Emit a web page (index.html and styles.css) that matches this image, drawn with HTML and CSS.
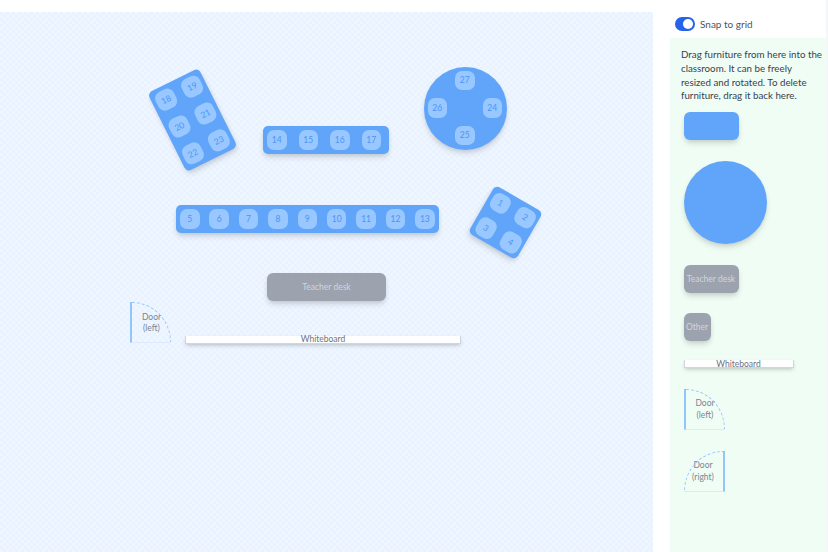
FILE: index.html
```html
<!DOCTYPE html>
<html lang="en">
<head>
<meta charset="utf-8">
<title>Classroom editor</title>
<link rel="stylesheet" href="styles.css">
</head>
<body>
<div class="app">
  <main class="classroom">
    <div class="desk round table-round">
      <span></span><span class="seat">27</span><span></span>
      <span class="seat">26</span><span></span><span class="seat">24</span>
      <span></span><span class="seat">25</span><span></span>
    </div>
    <div class="desk group-six">
      <span class="seat">18</span><span class="seat">19</span>
      <span class="seat">20</span><span class="seat">21</span>
      <span class="seat">22</span><span class="seat">23</span>
    </div>
    <div class="desk row-four">
      <span class="seat">14</span><span class="seat">15</span><span class="seat">16</span><span class="seat">17</span>
    </div>
    <div class="desk row-nine">
      <span class="seat">5</span><span class="seat">6</span><span class="seat">7</span><span class="seat">8</span><span class="seat">9</span><span class="seat">10</span><span class="seat">11</span><span class="seat">12</span><span class="seat">13</span>
    </div>
    <div class="desk group-four">
      <span class="seat">1</span><span class="seat">2</span>
      <span class="seat">3</span><span class="seat">4</span>
    </div>
    <div class="grey-block placed-teacher">Teacher desk</div>
    <div class="door door-left placed-door">Door<br>(left)</div>
    <div class="whiteboard placed-board">Whiteboard</div>
  </main>
  <aside class="sidebar">
    <label class="snap">
      <span class="toggle"><span class="knob"></span></span>
      <span>Snap to grid</span>
    </label>
    <section class="palette">
      <p class="help">Drag furniture from here into the classroom. It can be freely resized and rotated. To delete furniture, drag it back here.</p>
      <div class="sample-rect"></div>
      <div class="sample-circle"></div>
      <div class="grey-block sample-teacher">Teacher desk</div>
      <div class="grey-block sample-other">Other</div>
      <div class="whiteboard sample-board">Whiteboard</div>
      <div class="door door-left">Door<br>(left)</div>
      <div class="door door-right">Door<br>(right)</div>
    </section>
  </aside>
</div>
</body>
</html>
```
FILE: styles.css
```css
* { box-sizing: border-box; }
html, body { margin: 0; height: 100%; overflow: hidden; background: #fff; }
body { font-family: "Lato", "Open Sans", sans-serif; color: #374151; }

.app { display: flex; width: 828px; height: 552px; }

.classroom {
  position: relative;
  width: 653px;
  height: 540px;
  margin-top: 12px;
  background-color: #e9f3ff;
  background-image:
    linear-gradient(45deg, rgba(255,255,255,.25) 25%, transparent 25%, transparent 75%, rgba(255,255,255,.25) 75%),
    linear-gradient(45deg, rgba(255,255,255,.25) 25%, transparent 25%, transparent 75%, rgba(255,255,255,.25) 75%);
  background-size: 6px 6px;
  background-position: 0 0, 3px 3px;
}

.desk {
  position: absolute;
  background: #60a5fa;
  border-radius: 5px;
  box-shadow: 0 4px 6px -1px rgba(0,0,0,.14), 0 2px 4px -1px rgba(0,0,0,.08);
}
.seat {
  display: flex;
  align-items: center;
  justify-content: center;
  width: 19.5px;
  height: 19.5px;
  border-radius: 7px;
  background: #98c8ff;
  color: #4d94f5;
  font-size: 8.5px;
}

.row-nine, .row-four { display: flex; align-items: center; padding-left: 4px; height: 28px; }
.row-nine { left: 176px; top: 193px; width: 263px; gap: 9.9px; }
.row-four { left: 263px; top: 114px; width: 126px; gap: 12px; }

.group-six {
  left: 164px; top: 64px; width: 57px; height: 88px;
  display: grid;
  grid-template-columns: 19.5px 19.5px;
  grid-auto-rows: 19.5px;
  column-gap: 9.5px;
  row-gap: 10.5px;
  padding: 4.25px;
  transform: rotate(-26.5deg);
}
.group-four {
  left: 477.5px; top: 182.5px; width: 55px; height: 55px;
  display: grid;
  grid-template-columns: 19.5px 19.5px;
  grid-auto-rows: 19.5px;
  gap: 9px;
  padding: 3.5px;
  transform: rotate(30deg);
}
.table-round {
  left: 424px; top: 55px; width: 83px; height: 83px;
  border-radius: 50%;
  display: grid;
  grid-template-columns: repeat(3, 19.5px);
  grid-auto-rows: 19.5px;
  gap: 8px;
  padding: 3.5px;
}

.grey-block {
  display: flex;
  align-items: center;
  justify-content: center;
  height: 28px;
  background: #9ca3af;
  border-radius: 6px;
  color: #d1d5db;
  font-size: 8.5px;
  white-space: nowrap;
  box-shadow: 0 4px 6px -1px rgba(0,0,0,.14), 0 2px 4px -1px rgba(0,0,0,.08);
}
.placed-teacher { position: absolute; left: 267px; top: 261px; width: 119px; }

.whiteboard {
  display: flex;
  justify-content: center;
  height: 8px;
  line-height: 6px;
  background: #fff;
  border: 1px solid #d1d5db;
  border-top-width: 0;
  color: #6b7280;
  font-size: 8.5px;
  box-shadow: 0 2px 4px -1px rgba(0,0,0,.25);
}
.placed-board { position: absolute; left: 185px; top: 324px; width: 276px; }

.door {
  position: relative;
  display: flex;
  align-items: center;
  justify-content: center;
  width: 41px;
  height: 41px;
  padding-top: 2px;
  border-bottom: 1px solid #dbeafe;
  color: #7b8494;
  font-size: 8.5px;
  line-height: 11.5px;
  text-align: center;
}
.door::before {
  content: "";
  position: absolute;
  inset: 0;
  border-top: 1px dashed #93c5fd;
}
.door-left { border-left: 2px solid #93c5fd; }
.door-left::before { border-right: 1px dashed #93c5fd; border-top-right-radius: 100%; }
.door-right { border-right: 2px solid #93c5fd; }
.door-right::before { border-left: 1px dashed #93c5fd; border-top-left-radius: 100%; }
.placed-door { position: absolute; left: 130px; top: 290px; }

.sidebar {
  display: flex;
  flex-direction: column;
  width: 175px;
  height: 552px;
  border-right: 2px solid #f5f6f7;
}
.snap {
  display: flex;
  align-items: center;
  gap: 5px;
  height: 38px;
  padding: 10px 0 0 22px;
  font-size: 10px;
  color: #4b5563;
}
.toggle {
  display: flex;
  align-items: center;
  justify-content: flex-end;
  width: 20px;
  height: 14px;
  padding-right: 2px;
  background: #2563eb;
  border-radius: 7px;
}
.knob { width: 10px; height: 10px; border-radius: 50%; background: #fff; }

.palette {
  flex: 1;
  display: flex;
  flex-direction: column;
  align-items: flex-start;
  gap: 20.75px;
  margin-left: 17px;
  padding: 10px 0 0 13.5px;
  background: #f0fdf4;
}
.help {
  margin: 0 0 -11.75px -2.5px;
  width: 142.5px;
  font-size: 9.75px;
  line-height: 13.8px;
  color: #374151;
}
.sample-rect {
  width: 55px;
  height: 28px;
  background: #60a5fa;
  border-radius: 6px;
  box-shadow: 0 4px 6px -1px rgba(0,0,0,.14), 0 2px 4px -1px rgba(0,0,0,.08);
}
.sample-circle {
  width: 83px;
  height: 83px;
  background: #60a5fa;
  border-radius: 50%;
  box-shadow: 0 4px 6px -1px rgba(0,0,0,.14), 0 2px 4px -1px rgba(0,0,0,.08);
}
.sample-teacher { width: 55px; }
.sample-other { width: 27px; }
.sample-board { width: 110px; margin-top: -2px; line-height: 8px; }
```
